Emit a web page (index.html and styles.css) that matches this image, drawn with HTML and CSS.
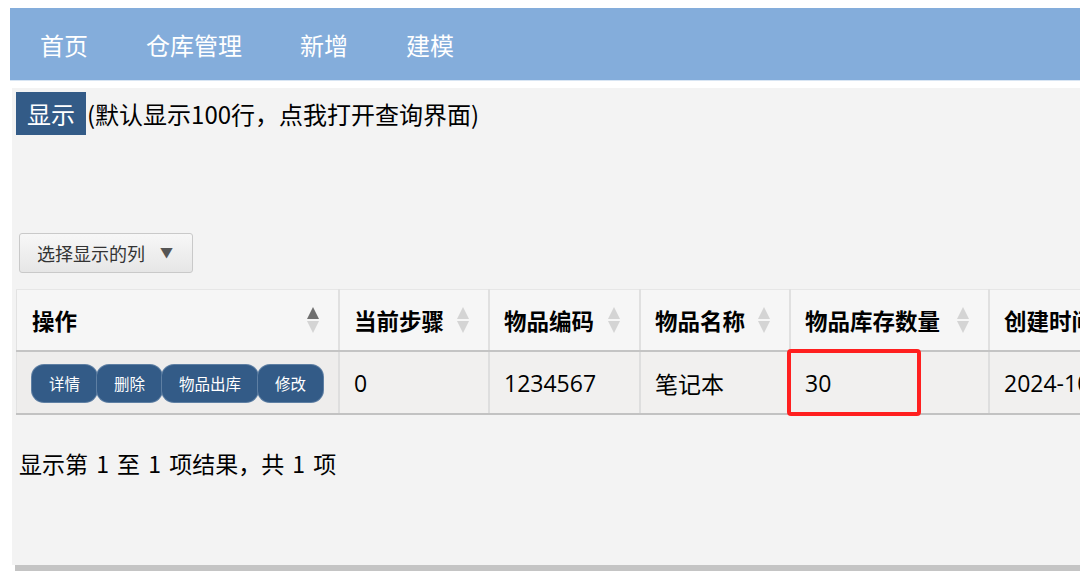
FILE: index.html
```html
<!DOCTYPE html>
<html lang="zh-CN">
<head>
<meta charset="utf-8">
<title>仓库管理</title>
<link rel="stylesheet" href="styles.css">
</head>
<body>
<nav class="topnav">
  <a class="nav-link" href="#">首页</a>
  <a class="nav-link" href="#">仓库管理</a>
  <a class="nav-link" href="#">新增</a>
  <a class="nav-link" href="#">建模</a>
</nav>
<main class="panel">
  <div class="query-row">
    <span class="show-btn">显示</span>
    <span class="query-hint">(默认显示100行，点我打开查询界面)</span>
  </div>
  <button class="col-picker">选择显示的列 <span class="caret">▼</span></button>
  <table class="grid">
    <thead>
      <tr>
        <th class="col-op sorted">操作<svg class="sort" viewBox="0 0 12 26" width="12" height="26"><polygon class="up" points="6,0 12,12 0,12"/><polygon class="down" points="0,14 12,14 6,26"/></svg></th>
        <th class="col-step">当前步骤<svg class="sort" viewBox="0 0 12 26" width="12" height="26"><polygon class="up" points="6,0 12,12 0,12"/><polygon class="down" points="0,14 12,14 6,26"/></svg></th>
        <th class="col-code">物品编码<svg class="sort" viewBox="0 0 12 26" width="12" height="26"><polygon class="up" points="6,0 12,12 0,12"/><polygon class="down" points="0,14 12,14 6,26"/></svg></th>
        <th class="col-name">物品名称<svg class="sort" viewBox="0 0 12 26" width="12" height="26"><polygon class="up" points="6,0 12,12 0,12"/><polygon class="down" points="0,14 12,14 6,26"/></svg></th>
        <th class="col-qty">物品库存数量<svg class="sort" viewBox="0 0 12 26" width="12" height="26"><polygon class="up" points="6,0 12,12 0,12"/><polygon class="down" points="0,14 12,14 6,26"/></svg></th>
        <th class="col-time">创建时间<svg class="sort" viewBox="0 0 12 26" width="12" height="26"><polygon class="up" points="6,0 12,12 0,12"/><polygon class="down" points="0,14 12,14 6,26"/></svg></th>
      </tr>
    </thead>
    <tbody>
      <tr>
        <td class="ops">
          <div class="op-group">
            <span class="op-btn">详情</span><span class="op-btn">删除</span><span class="op-btn">物品出库</span><span class="op-btn">修改</span>
          </div>
        </td>
        <td>0</td>
        <td>1234567</td>
        <td>笔记本</td>
        <td class="qty-cell">30<span class="mark"></span></td>
        <td>2024-10-15 09:30:00</td>
      </tr>
    </tbody>
  </table>
  <p class="info">显示第 1 至 1 项结果，共 1 项</p>
</main>
<div class="scroll-track"></div>
</body>
</html>
```
FILE: styles.css
```css
html, body {
  overflow: hidden;
}
body {
  margin: 8px 0 0 10px;
  background: #ffffff;
  font-family: "Open Sans", "Noto Sans CJK SC", sans-serif;
  color: #000;
  width: 1300px;
}
.topnav {
  height: 72px;
  background: #84addb;
  display: flex;
  align-items: center;
  border-bottom: 1px solid #d8e5f3;
}
.nav-link {
  color: #ffffff;
  text-decoration: none;
  font-family: "Noto Sans CJK SC", sans-serif;
  font-size: 24px;
  padding: 0 29px 0 30px;
  line-height: 1;
  margin-top: 1px;
}
.nav-link + .nav-link {
  padding-left: 29px;
}
.panel {
  margin: 7px 0 0 2px;
  background: #f3f3f3;
  height: 477px;
  padding: 4px;
  box-sizing: border-box;
}
.query-row {
  display: flex;
  align-items: center;
  height: 43px;
}
.show-btn {
  background: #335b87;
  color: #fff;
  font-family: "Noto Sans CJK SC", sans-serif;
  font-size: 24px;
  height: 43px;
  line-height: 43px;
  padding: 0 11px 0 11px;
  box-sizing: border-box;
}
.query-hint {
  font-family: "Noto Sans CJK SC", sans-serif;
  font-size: 24px;
  margin-left: 1px;
}
.col-picker {
  display: flex;
  align-items: center;
  margin: 98px 0 0 3px;
  width: 174px;
  height: 40px;
  border: 1px solid #c9c9c9;
  border-radius: 3px;
  background: linear-gradient(#f7f7f7, #e6e6e6);
  font-family: "Noto Sans CJK SC", sans-serif;
  font-size: 18px;
  color: #333;
  padding: 0 0 0 17px;
  box-sizing: border-box;
}
.caret {
  font-size: 13px;
  color: #555;
  margin-left: 15px;
  margin-top: -3px;
}
.grid {
  margin-top: 16px;
  border-collapse: collapse;
  table-layout: fixed;
  border-left: 1px solid #e2e2e2;
  border-top: 1px solid #e6e6e6;
}
.grid th {
  position: relative;
  height: 60px;
  padding: 0 16px 0 14px;
  text-align: left;
  font-family: "Noto Sans CJK SC", sans-serif;
  font-weight: 700;
  font-size: 22.5px;
  background: #f6f6f6;
  border-right: 2px solid #e0e0e0;
  border-bottom: 2px solid #c4c4c4;
  white-space: nowrap;
}
.grid th.col-op {
  padding-left: 15px;
}
.sort {
  position: absolute;
  right: 19px;
  top: 17px;
}
.sort polygon {
  fill: #d4d4d4;
}
.sorted .sort .up {
  fill: #707070;
}
.col-op { width: 290px; }
.col-step { width: 118px; }
.col-code { width: 119px; }
.col-name { width: 118px; }
.col-qty { width: 167px; }
.col-time { width: 200px; }
.grid td {
  height: 61px;
  padding: 0 16px 0 14px;
  font-size: 23px;
  background: #f1f0ef;
  border-right: 2px solid #dedede;
  border-bottom: 2px solid #c2c2c2;
  white-space: nowrap;
  font-family: "Open Sans", "Noto Sans CJK SC", sans-serif;
}
.grid td.ops {
  padding: 0 0 0 15px;
  background: #eeedec;
}
.op-group {
  display: flex;
  margin-top: 2px;
}
.op-btn {
  background: #335b87;
  color: #fff;
  font-family: "Noto Sans CJK SC", sans-serif;
  font-size: 15.5px;
  height: 37px;
  line-height: 37px;
  padding: 0 17px;
  border-radius: 12px;
  box-shadow: 0 0 0 1px #5e7fa3;
}
.qty-cell {
  position: relative;
}
.mark {
  position: absolute;
  left: -4px;
  top: -3px;
  width: 134px;
  height: 67px;
  border: 4px solid #ff1f1f;
  border-radius: 4px;
  box-sizing: border-box;
}
.info {
  margin: 31px 0 0 3px;
  font-family: "Noto Sans CJK SC", sans-serif;
  font-size: 23px;
  word-spacing: 3px;
}
.scroll-track {
  margin-left: 5px;
  height: 6px;
  background: #c4c4c4;
}
```
